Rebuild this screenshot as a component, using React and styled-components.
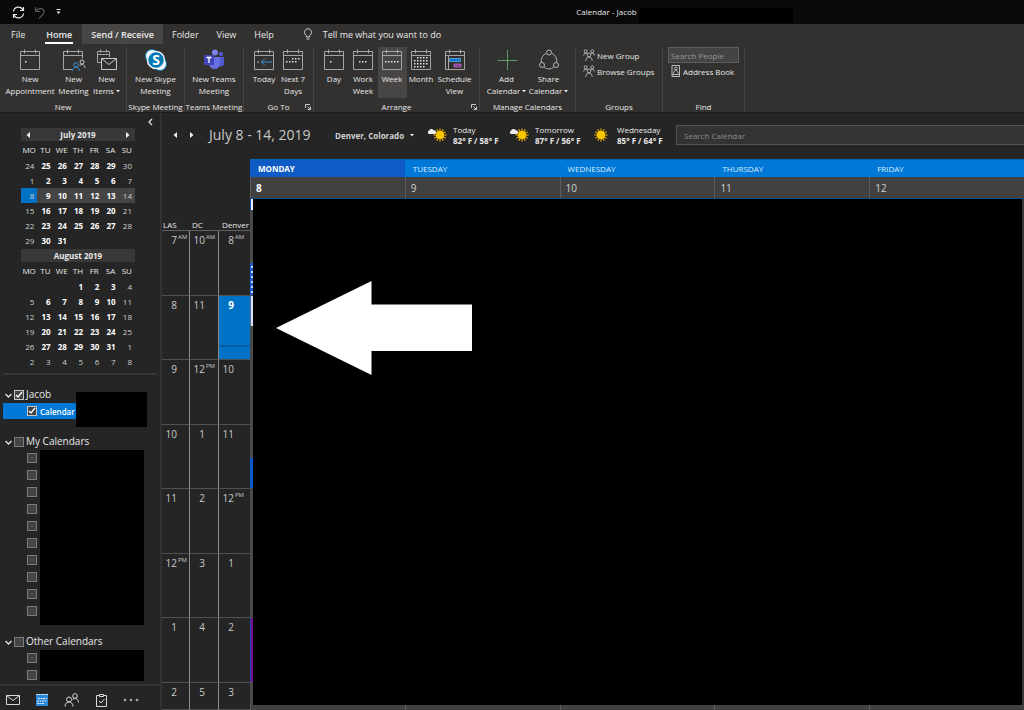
import React, { useState } from "react";
import styled, { createGlobalStyle } from "styled-components";

const GlobalStyle = createGlobalStyle`
  * {
    box-sizing: border-box;
  }
  body {
    margin: 0;
    background: #252525;
    color: #e8e8e8;
    font-family: "Open Sans", "Noto Sans", sans-serif;
    font-size: 8px;
    font-weight: 500;
    line-height: 11px;
  }
  button,
  input {
    font: inherit;
    color: inherit;
  }
  button {
    padding: 0;
    border: 0;
    background: none;
  }
  svg {
    display: block;
    flex: none;
  }
`;

const Page = styled.div`
  min-height: 100vh;
  display: flex;
  flex-direction: column;
`;

/* title bar */
const TitleBar = styled.header`
  height: 24px;
  display: flex;
  background: #090909;
`;
const QuickAccess = styled.div`
  flex: 571;
  display: flex;
  align-items: center;
  gap: 8px;
  padding-left: 12px;
`;
const WindowTitle = styled.div`
  flex: 453;
  display: flex;
  align-items: center;
  gap: 2px;
  padding-bottom: 2px;
  white-space: nowrap;
`;
const TitleMask = styled.div`
  width: 154px;
  height: 15px;
  margin-top: 9px;
  background: #000;
`;

/* tabs */
const TabBar = styled.nav`
  height: 20px;
  display: flex;
  align-items: stretch;
  background: #323130;
  font-size: 9px;
`;
const Tab = styled.button`
  display: flex;
  flex-direction: column;
  align-items: center;
  padding: 5px ${(props) => props.$pad || 8}px 0;
  background: ${(props) => (props.$hover ? "#484644" : "none")};
  font-weight: ${(props) => (props.$strong ? 600 : 500)};
  white-space: nowrap;
`;
const TabText = styled.span`
  height: 15px;
  padding: 0 1px;
  border-bottom: 2px solid ${(props) => (props.$active ? "#fff" : "transparent")};
`;
const TellMe = styled.button`
  display: flex;
  align-items: center;
  gap: 10px;
  padding: 0 0 0 20px;
  white-space: nowrap;
`;

/* ribbon */
const Ribbon = styled.div`
  height: 69px;
  display: flex;
  padding: 3px 0 0;
  background: #323130;
  border-bottom: 1px solid #1c1c1b;
`;
const Group = styled.section`
  width: ${(props) => props.$width}px;
  height: 64px;
  flex: none;
  display: flex;
  flex-direction: column;
  justify-content: space-between;
  border-right: 1px solid #454443;
`;
const GroupItems = styled.div`
  display: flex;
  justify-content: center;
`;
const GroupLabel = styled.div`
  display: flex;
  justify-content: center;
  align-items: center;
  position: relative;
  line-height: 9px;
  white-space: nowrap;
`;
const Launcher = styled.button`
  position: absolute;
  right: 2px;
  top: 2px;
`;
const BigButton = styled.button`
  width: ${(props) => props.$width}px;
  height: 51px;
  display: flex;
  flex-direction: column;
  align-items: center;
  gap: 2px;
  padding-top: 2px;
  background: ${(props) => (props.$active ? "#484644" : "none")};
  line-height: 12px;
  white-space: nowrap;
`;
const ButtonLine = styled.span`
  display: flex;
  align-items: center;
  justify-content: center;
  gap: 2px;
`;
const SmallItems = styled.div`
  display: flex;
  flex-direction: column;
  padding-left: 5px;
`;
const SmallButton = styled.button`
  height: 16px;
  display: flex;
  align-items: center;
  gap: 2px;
  padding-left: ${(props) => props.$indent || 2}px;
  white-space: nowrap;
`;
const PeopleSearch = styled.input`
  width: 71px;
  height: 16px;
  padding: 0 2px;
  border: 1px solid #605e5c;
  border-radius: 0;
  background: #444;
  &::placeholder {
    color: #969492;
  }
`;

/* sidebar */
const Body = styled.div`
  flex: 1;
  display: flex;
`;
const Sidebar = styled.aside`
  width: 162px;
  flex: none;
  display: flex;
  flex-direction: column;
  border-right: 2px solid #323232;
`;
const CollapseRow = styled.div`
  height: 15px;
  display: flex;
  justify-content: flex-end;
  padding: 3px 6px 0;
`;
const MiniMonths = styled.div`
  width: 114px;
  margin: 0 0 4px 21px;
`;
const MonthBar = styled.div`
  height: 13px;
  display: flex;
  align-items: center;
  justify-content: space-between;
  padding: 0 4px;
  margin-top: ${(props) => (props.$second ? 1 : 0)}px;
  background: #383838;
`;
const MonthName = styled.b`
  flex: 1;
  text-align: center;
`;
const MonthTable = styled.table`
  width: 100%;
  table-layout: fixed;
  border-collapse: collapse;
  text-align: right;
`;
const WeekHead = styled.th`
  height: 17px;
  padding: 0;
  font-weight: 500;
  text-align: center;
`;
const WeekRow = styled.tr`
  background: ${(props) => (props.$active ? "#444" : "none")};
`;
const DayCell = styled.td`
  height: 15px;
  padding: 0 3px 1px 0;
  background: ${(props) => (props.$today ? "#0072c6" : "none")};
  color: ${(props) => (props.$bold ? "#fff" : "#d0d0d0")};
  font-weight: ${(props) => (props.$bold ? 700 : 500)};
`;
const SideDivider = styled.hr`
  width: 154px;
  height: 2px;
  margin: 0 0 11px 3px;
  border: 0;
  background: #353535;
`;
const Folder = styled.section`
  position: relative;
  margin-bottom: ${(props) => props.$space}px;
`;
const FolderHead = styled.div`
  height: 17px;
  display: flex;
  align-items: center;
  gap: 2px;
  padding-left: 5px;
  font-size: 10px;
  font-weight: 400;
`;
const FolderLabel = styled.label`
  display: flex;
  align-items: center;
  gap: 2px;
  white-space: nowrap;
`;
const Check = styled.input`
  appearance: none;
  width: 10px;
  height: 10px;
  margin: 0;
  flex: none;
  border: 1px solid ${(props) => (props.checked ? "#c8c8c8" : "#7c7c7c")};
  background: #444
    ${(props) =>
      props.checked
        ? `url("data:image/svg+xml,%3Csvg xmlns='http://www.w3.org/2000/svg' viewBox='0 0 8 8'%3E%3Cpath d='M1 4l2 2 4-5' fill='none' stroke='white' stroke-width='1.3'/%3E%3C/svg%3E")`
        : ""};
`;
const ActiveCalendar = styled.label`
  width: 73px;
  height: 16px;
  margin-left: 3px;
  padding-left: 24px;
  display: flex;
  align-items: center;
  gap: 3px;
  background: #0078d7;
  color: #fff;
  font-weight: 600;
`;
const NameMask = styled.div`
  position: absolute;
  left: 76px;
  top: 6px;
  width: 71px;
  height: 35px;
  background: #000;
`;
const CheckList = styled.div`
  display: flex;
  gap: 3px;
  padding-left: 27px;
`;
const Checks = styled.div`
  display: flex;
  flex-direction: column;
  gap: 7px;
  padding: ${(props) => (props.$long ? "3px 0 9px" : "3px 0 1px")};
`;
const ListMask = styled.div`
  width: 104px;
  background: #000;
`;
const ModuleBar = styled.nav`
  height: 26px;
  margin-top: auto;
  display: flex;
  align-items: center;
  gap: 15px;
  padding: 4px 6px 0;
  border-top: 2px solid #323232;
`;

/* calendar */
const Main = styled.main`
  flex: 1;
  min-width: 0;
  display: flex;
  flex-direction: column;
`;
const Toolbar = styled.div`
  height: 46px;
  display: flex;
  align-items: center;
  padding: 0 0 2px 10px;
  white-space: nowrap;
`;
const Arrows = styled.div`
  display: flex;
  gap: 11px;
  width: 37px;
`;
const RangeTitle = styled.h1`
  width: 126px;
  margin: 0;
  font-size: 14px;
  font-weight: 400;
  line-height: 20px;
  color: #c8c8c8;
`;
const Place = styled.button`
  width: 92px;
  display: flex;
  align-items: center;
  gap: 6px;
  font-weight: 700;
  color: #d2d2d2;
`;
const Forecast = styled.div`
  width: 82px;
  display: flex;
  align-items: center;
  gap: 6px;
`;
const ForecastText = styled.div`
  display: flex;
  flex-direction: column;
`;
const CalendarSearch = styled.input`
  flex: 1;
  min-width: 0;
  height: 20px;
  margin-left: 3px;
  padding: 0 7px;
  border: 1px solid #555;
  border-right: 0;
  border-radius: 0;
  background: #333;
  &::placeholder {
    color: #8c8c8c;
  }
`;
const Planner = styled.div`
  flex: 1;
  display: grid;
  grid-template-columns: 88px 1fr;
`;
const TimeScale = styled.div`
  display: flex;
  flex-direction: column;
`;
const ZoneNames = styled.div`
  height: 72px;
  display: grid;
  grid-template-columns: 29px 30px 1fr;
  align-items: end;
  padding-left: 1px;
  border-bottom: 1px solid #606060;
`;
const Hours = styled.div`
  flex: 1;
  display: grid;
  grid-template-columns: 28px 29px 1fr;
  grid-template-rows: repeat(7, 1fr) 27px;
`;
const HourCell = styled.div`
  display: flex;
  align-items: flex-start;
  gap: 1px;
  padding-top: 2px;
  border-right: ${(props) => (props.$last ? "0" : "1px solid #8a8a8a")};
  border-bottom: 1px solid #505050;
  background: ${(props) =>
    props.$now
      ? "linear-gradient(#0072c6 78%, #005da3 78% 81%, #0072c6 81%)"
      : "none"};
  color: ${(props) => (props.$now ? "#fff" : "#c8c8c8")};
  font-size: 10px;
  font-weight: ${(props) => (props.$now ? 700 : 400)};
  line-height: 14px;
`;
const HourNumber = styled.span`
  width: 15px;
  text-align: right;
`;
const Meridiem = styled.span`
  font-size: 6px;
  line-height: 9px;
`;
const Week = styled.div`
  display: flex;
  flex-direction: column;
`;
const DayGrid = styled.div`
  display: grid;
  grid-template-columns: repeat(5, 1fr);
`;
const DayName = styled.div`
  height: 18px;
  padding: 3px 8px;
  background: ${(props) => (props.$today ? "#0f5bc5" : "#0078d7")};
  border-top: 1px solid #0067b8;
  color: ${(props) => (props.$today ? "#fff" : "#dceefc")};
  font-weight: ${(props) => (props.$today ? 700 : 500)};
`;
const DayNumber = styled.div`
  height: 22px;
  padding: 4px 5px;
  background: #414141;
  border-left: 1px solid #5c5c5c;
  border-bottom: 1px solid #00508f;
  color: ${(props) => (props.$today ? "#fff" : "#d0d0d0")};
  font-size: 10px;
  font-weight: ${(props) => (props.$today ? 700 : 400)};
  line-height: 14px;
`;
const Schedule = styled.div`
  flex: 1;
  display: flex;
  border-right: 2px solid #3a3a3a;
`;
const EventStrip = styled.div`
  width: 3px;
  display: flex;
  flex-direction: column;
  background: #4a4a4a;
`;
const EventPart = styled.div`
  flex: ${(props) => props.$span};
  border-left: ${(props) => (props.$edge ? `1px solid ${props.$edge}` : "0")};
  background: ${(props) => props.$fill};
`;
const ScheduleMask = styled.div`
  flex: 1;
  padding: 82px 0 0 23px;
  background: #000;
`;
const Footer = styled.div`
  height: 5px;
  border-left: 1px solid #5c5c5c;
  background: #414141;
`;

const months = [
  {
    name: "July 2019",
    current: 2,
    today: 0,
    weeks: [
      [24, 25, 26, 27, 28, 29, 30],
      [1, 2, 3, 4, 5, 6, 7],
      [8, 9, 10, 11, 12, 13, 14],
      [15, 16, 17, 18, 19, 20, 21],
      [22, 23, 24, 25, 26, 27, 28],
      [29, 30, 31, "", "", "", ""],
    ],
  },
  {
    name: "August 2019",
    weeks: [
      ["", "", "", 1, 2, 3, 4],
      [5, 6, 7, 8, 9, 10, 11],
      [12, 13, 14, 15, 16, 17, 18],
      [19, 20, 21, 22, 23, 24, 25],
      [26, 27, 28, 29, 30, 31, 1],
      [2, 3, 4, 5, 6, 7, 8],
    ],
  },
];

const hours = [
  ["7 AM", "10 AM", "8 AM"],
  ["8", "11", "9"],
  ["9", "12 PM", "10"],
  ["10", "1", "11"],
  ["11", "2", "12 PM"],
  ["12 PM", "3", "1"],
  ["1", "4", "2"],
  ["2", "5", "3"],
];

const weekDays = [
  ["MONDAY", 8],
  ["TUESDAY", 9],
  ["WEDNESDAY", 10],
  ["THURSDAY", 11],
  ["FRIDAY", 12],
];

const eventParts = [
  { span: 11, fill: "#e8eefc", edge: "#0f5bc5" },
  { span: 53, fill: "none" },
  {
    span: 32,
    fill: "repeating-linear-gradient(#1f5fd0 0 3px, #c4d4f4 3px 5px)",
    edge: "#1f5fd0",
  },
  { span: 1, fill: "none" },
  { span: 30, fill: "#d8e2f8", edge: "#5c6f94" },
  { span: 132, fill: "none" },
  { span: 30, fill: "#0a5bd0", edge: "#0a5bd0" },
  { span: 130, fill: "none" },
  { span: 64, fill: "#75108c", edge: "#2b3fb0" },
  { span: 23, fill: "none" },
];

const dots = {
  appointment: [[7, 13]],
  day: [[8, 13]],
  work: [[8, 13], [11, 13], [14, 13]],
  week: [[5, 13], [8, 13], [11, 13], [14, 13], [17, 13]],
  next: [
    [11, 10], [14, 10], [17, 10],
    [5, 13], [8, 13], [11, 13], [14, 13],
  ],
  month: [
    [8, 9], [11, 9], [14, 9], [17, 9],
    [5, 12], [8, 12], [11, 12], [14, 12], [17, 12],
    [5, 15], [8, 15], [11, 15], [14, 15], [17, 15],
    [5, 18], [8, 18], [11, 18], [14, 18],
  ],
};

function CalendarIcon({ kind, children }) {
  return (
    <svg width="22" height="22" viewBox="0 0 22 22" fill="none">
      <path
        d="M1.5 2.5h19v18h-19zM1.5 6.5h19M5.5 .5v4M16.5 .5v4"
        stroke="#a6a5a4"
      />
      {(dots[kind] || []).map(([x, y]) => (
        <rect key={`${x}-${y}`} x={x - 1} y={y - 1} width="1.5" height="1.5" fill="#e4e4e4" />
      ))}
      {children}
    </svg>
  );
}

function MeetingIcon() {
  return (
    <svg width="24" height="22" viewBox="0 0 24 22" fill="none">
      <path d="M10 20.5H1.5v-18h19v7M1.5 6.5h19M5.5 .5v4M16.5 .5v4" stroke="#a6a5a4" />
      <circle cx="14" cy="16" r="2.2" stroke="#3a8fd8" />
      <path d="M10.5 22c0-5 7-5 7 0" stroke="#3a8fd8" />
      <circle cx="20" cy="13" r="2" stroke="#c8c8c8" />
      <path d="M17.5 17c1.5-2.3 5.5-2 5.5 2" stroke="#c8c8c8" />
    </svg>
  );
}

function ItemsIcon() {
  return (
    <svg width="22" height="22" viewBox="0 0 22 22" fill="none">
      <path d="M5 13.5H1.5v-11h12V8M1.5 5.5h12M4.5 .5v3M10.5 .5v3" stroke="#a6a5a4" />
      <path d="M5.5 9.5h15v11h-15zM5.5 9.5l7.5 6 7.5-6" stroke="#c8c8c8" />
    </svg>
  );
}

function SkypeIcon() {
  return (
    <svg width="22" height="22" viewBox="0 0 22 22">
      <circle cx="7" cy="7" r="6.5" fill="#f3f8fb" stroke="#0078b4" />
      <circle cx="15" cy="15" r="6.5" fill="#f3f8fb" stroke="#0078b4" />
      <circle cx="11" cy="11" r="8.5" fill="#0078b4" stroke="#f3f8fb" strokeWidth="1.5" />
      <text x="11" y="16" textAnchor="middle" fontSize="14" fontWeight="700" fill="#fff">
        S
      </text>
    </svg>
  );
}

function TeamsIcon() {
  return (
    <svg width="22" height="22" viewBox="0 0 22 22">
      <circle cx="18" cy="5" r="2.2" fill="#5059c9" />
      <path d="M15 8h6v6.5a3 3 0 0 1-6 0z" fill="#5059c9" />
      <circle cx="12" cy="3.5" r="3" fill="#7b83eb" />
      <path d="M6 8h11v6.5a5.5 5.5 0 0 1-11 0z" fill="#6670e4" />
      <rect x="1" y="6" width="10" height="10" rx="1" fill="#4046b8" />
      <path d="M3.5 8.5h5M6 8.5v5.5" stroke="#fff" strokeWidth="1.3" />
    </svg>
  );
}

function PlusIcon() {
  return (
    <svg width="22" height="22" viewBox="0 0 22 22">
      <path d="M11.5 1v20M1.5 11.5h20" stroke="#5a9c6c" />
    </svg>
  );
}

function ShareIcon() {
  return (
    <svg width="22" height="22" viewBox="0 0 22 22" fill="none" stroke="#b4b3b2">
      <circle cx="11" cy="3.5" r="2.5" />
      <circle cx="4" cy="16" r="2.5" />
      <circle cx="18" cy="16" r="2.5" />
      <path d="M8.5 4.2C5 5.5 3 9 3.2 13.3M13.5 4.2C17 5.5 19 9 18.8 13.3M6 17.9c3 2.8 7 2.8 10 0" />
    </svg>
  );
}

function GroupIcon() {
  return (
    <svg width="12" height="12" viewBox="0 0 12 12" fill="none" stroke="#bdbcbb" strokeWidth=".9">
      <circle cx="2.7" cy="2.3" r="1.5" />
      <circle cx="9.3" cy="2.3" r="1.5" />
      <circle cx="6" cy="6" r="1.9" />
      <path d="M.7 6.5c0-3 3-3 3.5-1.5M11.3 6.5c0-3-3-3-3.5-1.5M2.8 11.8c0-5 6.4-5 6.4 0" />
    </svg>
  );
}

function AddressIcon() {
  return (
    <svg width="10" height="12" viewBox="0 0 10 12" fill="none" stroke="#c8c8c8" strokeWidth=".9">
      <path d="M1 .5h7.5v11H1zM1 9.5h7.5" />
      <circle cx="4.8" cy="3.5" r="1.4" />
      <path d="M2.5 8.5c0-4 4.6-4 4.6 0" />
    </svg>
  );
}

function Triangle({ dir, size = 6 }) {
  const shapes = {
    left: "M5 0v6L1.5 3z",
    right: "M1 0v6l3.5-3z",
    down: "M0 1.5h6L3 5z",
  };
  return (
    <svg width={size} height={size} viewBox="0 0 6 6">
      <path d={shapes[dir]} fill="#f0f0f0" />
    </svg>
  );
}

function Chevron({ dir }) {
  return (
    <svg width="7" height="8" viewBox="0 0 7 8" fill="none" stroke="#e4e4e4" strokeWidth="1.3">
      <path d={dir === "left" ? "M5 1L2 4l3 3" : "M.5 3l3 3 3-3"} />
    </svg>
  );
}

function WeatherIcon({ cloudy }) {
  return (
    <svg width="20" height="16" viewBox={cloudy ? "0 0 20 16" : "3 0 20 16"}>
      {[0, 30, 60, 90, 120, 150].map((deg) => (
        <path
          key={deg}
          d="M13 1.5v13"
          stroke="#e3ac00"
          strokeWidth="1.2"
          transform={`rotate(${deg} 13 8)`}
        />
      ))}
      <circle cx="13" cy="8" r="4" fill="#fbc800" />
      {cloudy && (
        <path d="M2 7a1.7 1.7 0 0 1 0-3.2 2.5 2.5 0 0 1 4.6-.5A2 2 0 0 1 8 7z" fill="#f0f0f0" />
      )}
    </svg>
  );
}

function RibbonButton({ icon, lines, width, active, menu }) {
  return (
    <BigButton $width={width} $active={active}>
      {icon}
      <span>
        {lines.map((line, index) => (
          <ButtonLine key={line}>
            {line}
            {menu && index === lines.length - 1 && <Triangle dir="down" size={4} />}
          </ButtonLine>
        ))}
      </span>
    </BigButton>
  );
}

function RibbonGroup({ label, width, launcher, children }) {
  return (
    <Group $width={width}>
      {children}
      <GroupLabel>
        {label}
        {launcher && (
          <Launcher aria-label={`${label} options`}>
            <svg width="6" height="6" viewBox="0 0 6 6" fill="none" stroke="#c8c8c8">
              <path d="M.5 4V.5H5M2.5 2.5l3 3M5.5 2.5v3h-3" />
            </svg>
          </Launcher>
        )}
      </GroupLabel>
    </Group>
  );
}

function MiniMonth({ month, second }) {
  return (
    <>
      <MonthBar $second={second}>
        {!second && (
          <button aria-label="Previous month">
            <Triangle dir="left" />
          </button>
        )}
        <MonthName>{month.name}</MonthName>
        {!second && (
          <button aria-label="Next month">
            <Triangle dir="right" />
          </button>
        )}
      </MonthBar>
      <MonthTable>
        <thead>
          <tr>
            {["MO", "TU", "WE", "TH", "FR", "SA", "SU"].map((el) => (
              <WeekHead key={el}>{el}</WeekHead>
            ))}
          </tr>
        </thead>
        <tbody>
          {month.weeks.map((week, row) => (
            <WeekRow key={row} $active={row === month.current}>
              {week.map((day, col) => (
                <DayCell
                  key={col}
                  $today={row === month.current && col === month.today}
                  $bold={col > 0 && col < 6 && !(second && row === 5)}
                >
                  {day}
                </DayCell>
              ))}
            </WeekRow>
          ))}
        </tbody>
      </MonthTable>
    </>
  );
}

function CalendarFolder({ name, count, space }) {
  const [checked, setChecked] = useState([]);
  const toggle = (id) => {
    setChecked(
      checked.includes(id) ? checked.filter((el) => el !== id) : [...checked, id]
    );
  };
  return (
    <Folder $space={space}>
      <FolderHead>
        <Chevron dir="down" />
        <FolderLabel>
          <Check
            type="checkbox"
            checked={checked.includes("all")}
            onChange={() => toggle("all")}
          />
          {name}
        </FolderLabel>
      </FolderHead>
      <CheckList>
        <Checks $long={count > 5}>
          {Array.from({ length: count }, (_, id) => (
            <Check
              key={id}
              type="checkbox"
              aria-label={`${name} ${id + 1}`}
              checked={checked.includes(id)}
              onChange={() => toggle(id)}
            />
          ))}
        </Checks>
        <ListMask />
      </CheckList>
    </Folder>
  );
}

function SidePane() {
  const [showAll, setShowAll] = useState(true);
  const [showMain, setShowMain] = useState(true);

  return (
    <Sidebar>
      <CollapseRow>
        <button aria-label="Collapse pane">
          <Chevron dir="left" />
        </button>
      </CollapseRow>
      <MiniMonths>
        <MiniMonth month={months[0]} />
        <MiniMonth month={months[1]} second />
      </MiniMonths>
      <SideDivider />
      <Folder $space={14}>
        <FolderHead>
          <Chevron dir="down" />
          <FolderLabel>
            <Check type="checkbox" checked={showAll} onChange={() => setShowAll(!showAll)} />
            Jacob
          </FolderLabel>
        </FolderHead>
        <ActiveCalendar>
          <Check type="checkbox" checked={showMain} onChange={() => setShowMain(!showMain)} />
          Calendar
        </ActiveCalendar>
        <NameMask />
      </Folder>
      <CalendarFolder name="My Calendars" count={10} space={8} />
      <CalendarFolder name="Other Calendars" count={2} space={0} />
      <ModuleBar>
        <button aria-label="Mail">
          <svg width="14" height="14" viewBox="0 0 14 14" fill="none" stroke="#d8d8d8">
            <path d="M.5 2.5h13v9H.5zM.5 2.5L7 7.5l6.5-5" />
          </svg>
        </button>
        <button aria-label="Calendar">
          <svg width="14" height="14" viewBox="0 0 14 14">
            <path d="M1 1h12v12H1z" fill="#2b88d8" />
            <path d="M1 1.5h12M3 5.5h9M2 8h10M2 10.5h7" stroke="#d6eafb" strokeDasharray="2 .5" />
          </svg>
        </button>
        <button aria-label="People">
          <svg width="16" height="14" viewBox="0 0 16 14" fill="none" stroke="#d8d8d8">
            <circle cx="5" cy="6.5" r="2.5" />
            <path d="M1 13.5c0-6 8-6 8 0" />
            <circle cx="11" cy="3" r="2.3" />
            <path d="M8.5 6.5c2-2 6-1 6 3" />
          </svg>
        </button>
        <button aria-label="Tasks">
          <svg width="13" height="14" viewBox="0 0 13 14" fill="none" stroke="#d8d8d8">
            <path d="M4 2.5H1.5v11h10v-11H9M4.5 1.5h4v2h-4zM4 8l2 2 3.5-4" />
          </svg>
        </button>
        <button aria-label="More">
          <svg width="16" height="14" viewBox="0 0 16 14" fill="#a8a8a8">
            <circle cx="2" cy="7" r="1.3" />
            <circle cx="8" cy="7" r="1.3" />
            <circle cx="14" cy="7" r="1.3" />
          </svg>
        </button>
      </ModuleBar>
    </Sidebar>
  );
}

function App() {
  const [people, setPeople] = useState("");
  const [query, setQuery] = useState("");

  return (
    <Page>
      <GlobalStyle />
      <TitleBar>
        <QuickAccess>
          <button aria-label="Send and receive all">
            <svg width="13" height="13" viewBox="0 0 13 13" fill="none" stroke="#e4e4e4" strokeWidth="1.2">
              <path d="M1.5 5.5a5 5 0 0 1 9.5-1.5M11.5 1v3.5H8M11.5 7.5A5 5 0 0 1 2 9M1.5 12V8.5H5" />
            </svg>
          </button>
          <button aria-label="Undo">
            <svg width="13" height="13" viewBox="0 0 13 13" fill="none" stroke="#555" strokeWidth="1.2">
              <path d="M2.5 1v4.5H7M2.5 5.5C5 1.5 11 1.5 11 6c0 3-3 3.5-5 6.5" />
            </svg>
          </button>
          <button aria-label="Customize">
            <svg width="9" height="6" viewBox="0 0 9 6" fill="#e4e4e4">
              <path d="M2.5 0h4v1h-4zM2.5 2.5h4l-2 2.5z" />
            </svg>
          </button>
        </QuickAccess>
        <WindowTitle>
          Calendar - Jacob
          <TitleMask />
        </WindowTitle>
      </TitleBar>
      <TabBar>
        <Tab $pad={10}>
          <TabText>File</TabText>
        </Tab>
        <Tab $pad={9} $strong>
          <TabText $active>Home</TabText>
        </Tab>
        <Tab $strong $hover>
          <TabText>Send / Receive</TabText>
        </Tab>
        <Tab>
          <TabText>Folder</TabText>
        </Tab>
        <Tab>
          <TabText>View</TabText>
        </Tab>
        <Tab>
          <TabText>Help</TabText>
        </Tab>
        <TellMe>
          <svg width="10" height="12" viewBox="0 0 10 12" fill="none" stroke="#d8d8d8">
            <path d="M3.5 9V7.8C0 5.5 1.5 .8 5 .8s5 4.7 1.5 7V9zM3.5 11h3" />
          </svg>
          Tell me what you want to do
        </TellMe>
      </TabBar>
      <Ribbon>
        <RibbonGroup label="New" width={127}>
          <GroupItems>
            <RibbonButton width={54} lines={["New", "Appointment"]} icon={<CalendarIcon kind="appointment" />} />
            <RibbonButton width={33} lines={["New", "Meeting"]} icon={<MeetingIcon />} />
            <RibbonButton width={33} lines={["New", "Items"]} menu icon={<ItemsIcon />} />
          </GroupItems>
        </RibbonGroup>
        <RibbonGroup label="Skype Meeting" width={58}>
          <GroupItems>
            <RibbonButton width={54} lines={["New Skype", "Meeting"]} icon={<SkypeIcon />} />
          </GroupItems>
        </RibbonGroup>
        <RibbonGroup label="Teams Meeting" width={59}>
          <GroupItems>
            <RibbonButton width={54} lines={["New Teams", "Meeting"]} icon={<TeamsIcon />} />
          </GroupItems>
        </RibbonGroup>
        <RibbonGroup label="Go To" width={70} launcher>
          <GroupItems>
            <RibbonButton
              width={29}
              lines={["Today"]}
              icon={
                <CalendarIcon>
                  <path d="M8 13h11M12 9.5L8.5 13l3.5 3.5" stroke="#3a8fd8" />
                  <path d="M4.5 13h1.5" stroke="#e4e4e4" />
                </CalendarIcon>
              }
            />
            <RibbonButton width={29} lines={["Next 7", "Days"]} icon={<CalendarIcon kind="next" />} />
          </GroupItems>
        </RibbonGroup>
        <RibbonGroup label="Arrange" width={166} launcher>
          <GroupItems>
            <RibbonButton width={29} lines={["Day"]} icon={<CalendarIcon kind="day" />} />
            <RibbonButton width={29} lines={["Work", "Week"]} icon={<CalendarIcon kind="work" />} />
            <RibbonButton width={29} lines={["Week"]} active icon={<CalendarIcon kind="week" />} />
            <RibbonButton width={29} lines={["Month"]} icon={<CalendarIcon kind="month" />} />
            <RibbonButton
              width={38}
              lines={["Schedule", "View"]}
              icon={
                <CalendarIcon>
                  <path d="M4.5 6.5v14" stroke="#a6a5a4" />
                  <path d="M5.5 9.5h11v3h-11z" fill="#0078d7" stroke="#8cc4f0" strokeWidth=".6" />
                  <path d="M10 15h7v3h-7z" fill="#8a3a9c" stroke="#c88ad4" strokeWidth=".6" />
                </CalendarIcon>
              }
            />
          </GroupItems>
        </RibbonGroup>
        <RibbonGroup label="Manage Calendars" width={96}>
          <GroupItems>
            <RibbonButton width={42} lines={["Add", "Calendar"]} menu icon={<PlusIcon />} />
            <RibbonButton width={42} lines={["Share", "Calendar"]} menu icon={<ShareIcon />} />
          </GroupItems>
        </RibbonGroup>
        <RibbonGroup label="Groups" width={87}>
          <SmallItems>
            <SmallButton>
              <GroupIcon />
              New Group
            </SmallButton>
            <SmallButton>
              <GroupIcon />
              Browse Groups
            </SmallButton>
          </SmallItems>
        </RibbonGroup>
        <RibbonGroup label="Find" width={82}>
          <SmallItems>
            <PeopleSearch
              value={people}
              onChange={(e) => setPeople(e.target.value)}
              placeholder="Search People"
              aria-label="Search People"
            />
            <SmallButton $indent={3}>
              <AddressIcon />
              Address Book
            </SmallButton>
          </SmallItems>
        </RibbonGroup>
      </Ribbon>
      <Body>
        <SidePane />
        <Main>
          <Toolbar>
            <Arrows>
              <button aria-label="Back">
                <Triangle dir="left" />
              </button>
              <button aria-label="Forward">
                <Triangle dir="right" />
              </button>
            </Arrows>
            <RangeTitle>July 8 - 14, 2019</RangeTitle>
            <Place>
              Denver, Colorado
              <Triangle dir="down" size={4} />
            </Place>
            <Forecast>
              <WeatherIcon cloudy />
              <ForecastText>
                <span>Today</span>
                <b>82° F / 58° F</b>
              </ForecastText>
            </Forecast>
            <Forecast>
              <WeatherIcon cloudy />
              <ForecastText>
                <span>Tomorrow</span>
                <b>87° F / 56° F</b>
              </ForecastText>
            </Forecast>
            <Forecast>
              <WeatherIcon />
              <ForecastText>
                <span>Wednesday</span>
                <b>85° F / 64° F</b>
              </ForecastText>
            </Forecast>
            <CalendarSearch
              value={query}
              onChange={(e) => setQuery(e.target.value)}
              placeholder="Search Calendar"
              aria-label="Search Calendar"
            />
          </Toolbar>
          <Planner>
            <TimeScale>
              <ZoneNames>
                <span>LAS</span>
                <span>DC</span>
                <span>Denver</span>
              </ZoneNames>
              <Hours>
                {hours.map((row, rowIndex) =>
                  row.map((hour, col) => {
                    const [number, meridiem] = hour.split(" ");
                    return (
                      <HourCell
                        key={`${rowIndex}-${col}`}
                        $last={col === 2}
                        $now={rowIndex === 1 && col === 2}
                      >
                        <HourNumber>{number}</HourNumber>
                        {meridiem && <Meridiem>{meridiem}</Meridiem>}
                      </HourCell>
                    );
                  })
                )}
              </Hours>
            </TimeScale>
            <Week>
              <DayGrid>
                {weekDays.map(([name], index) => (
                  <DayName key={name} $today={index === 0}>
                    {name}
                  </DayName>
                ))}
                {weekDays.map(([name, number], index) => (
                  <DayNumber key={name} $today={index === 0}>
                    {number}
                  </DayNumber>
                ))}
              </DayGrid>
              <Schedule>
                <EventStrip>
                  {eventParts.map((part, index) => (
                    <EventPart key={index} $span={part.span} $fill={part.fill} $edge={part.edge} />
                  ))}
                </EventStrip>
                <ScheduleMask>
                  <svg width="196" height="94" viewBox="0 0 196 94">
                    <path d="M0 47L95.5 0v23.5H196V70H95.5v24z" fill="#fff" />
                  </svg>
                </ScheduleMask>
              </Schedule>
              <DayGrid>
                {weekDays.map(([name]) => (
                  <Footer key={name} />
                ))}
              </DayGrid>
            </Week>
          </Planner>
        </Main>
      </Body>
    </Page>
  );
}

export default App;
